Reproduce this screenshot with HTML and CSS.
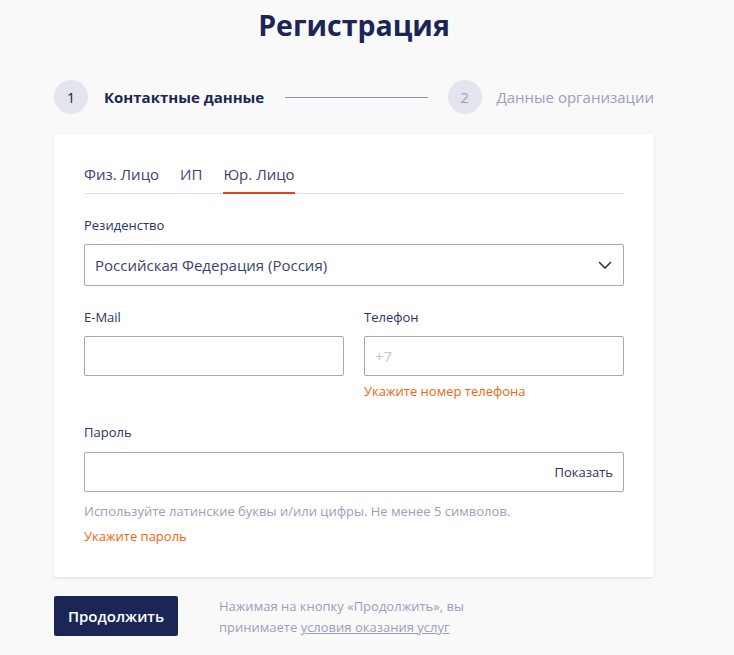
FILE: index.html
```html
<!DOCTYPE html>
<html lang="ru">
<head>
<meta charset="utf-8">
<title>Регистрация</title>
<link rel="stylesheet" href="styles.css">
</head>
<body>
<div class="page">
  <h1 class="title">Регистрация</h1>
  <div class="steps">
    <div class="step step-active">
      <span class="step-num">1</span>
      <span class="step-label">Контактные данные</span>
    </div>
    <div class="step-line"></div>
    <div class="step">
      <span class="step-num">2</span>
      <span class="step-label">Данные организации</span>
    </div>
  </div>

  <div class="card">
    <div class="tabs">
      <span class="tab">Физ. Лицо</span>
      <span class="tab">ИП</span>
      <span class="tab tab-active">Юр. Лицо</span>
    </div>

    <div class="field field-first">
      <div class="label">Резиденство</div>
      <div class="select">
        <span>Российская Федерация (Россия)</span>
        <svg class="chevron" width="14" height="8" viewBox="0 0 14 8"><path d="M1 1l6 6 6-6" fill="none" stroke="#2b3560" stroke-width="1.6"/></svg>
      </div>
    </div>

    <div class="row">
      <div class="field">
        <div class="label">E-Mail</div>
        <div class="input"></div>
      </div>
      <div class="field">
        <div class="label">Телефон</div>
        <div class="input"><span class="placeholder">+7</span></div>
        <div class="error error-tight">Укажите номер телефона</div>
      </div>
    </div>

    <div class="field field-pass">
      <div class="label">Пароль</div>
      <div class="input input-pass"><span class="show">Показать</span></div>
      <div class="hint">Используйте латинские буквы и/или цифры. Не менее 5 символов.</div>
      <div class="error">Укажите пароль</div>
    </div>
  </div>

  <div class="footer">
    <button class="btn">Продолжить</button>
    <p class="terms">Нажимая на кнопку «Продолжить», вы<br>принимаете <a class="terms-link">условия оказания услуг</a></p>
  </div>
</div>
</body>
</html>
```

FILE: styles.css
```css
* { box-sizing: border-box; }
html, body {
  margin: 0;
  padding: 0;
  background: #f9f9fa;
  font-family: "Open Sans", "Noto Sans", sans-serif;
  color: #2b3560;
}
.page {
  width: 600px;
  margin-left: 54px;
}
.title {
  margin: 0;
  font-size: 28.5px;
  line-height: 50px;
  font-weight: 700;
  color: #1b2656;
  text-align: center;
}
.steps {
  display: flex;
  align-items: center;
  margin-top: 30px;
  height: 34px;
}
.step {
  display: flex;
  align-items: center;
  gap: 15px;
}
.step-num {
  width: 34px;
  height: 34px;
  border-radius: 50%;
  background: #e2e5ee;
  display: flex;
  align-items: center;
  justify-content: center;
  font-size: 15px;
  color: #9aa0b8;
}
.step-label {
  font-size: 15px;
  color: #9aa0b8;
}
.step-active { gap: 16px; }
.step-active .step-num { color: #1b2656; }
.step-active .step-label { color: #1b2656; font-weight: 700; }
.step-line {
  flex: 1;
  height: 1px;
  background: #8a93b5;
  margin: 0 20px 0 21px;
}
.card {
  margin-top: 20px;
  background: #fff;
  border-radius: 2px;
  box-shadow: 0 1px 3px rgba(30, 40, 80, 0.12);
  padding: 30px 30px 32px;
}
.tabs {
  display: flex;
  gap: 21px;
  border-bottom: 1px solid #dfe1e8;
}
.tab {
  font-size: 15px;
  line-height: 20px;
  padding-bottom: 9px;
  color: #3a4470;
}
.tab-active {
  border-bottom: 2px solid #e8401c;
  margin-bottom: -1px;
  padding-bottom: 8px;
}
.field-first { margin-top: 22px; }
.label {
  font-size: 13px;
  line-height: 18px;
  margin-bottom: 10px;
  color: #2b3560;
}
.select {
  height: 42px;
  border: 1px solid #a3a8bf;
  border-radius: 2px;
  display: flex;
  align-items: center;
  justify-content: space-between;
  padding: 0 11px 0 10px;
  font-size: 15px;
  color: #3a4470;
}
.row {
  display: grid;
  grid-template-columns: 1fr 1fr;
  gap: 20px;
  margin-top: 22px;
}
.input {
  height: 40px;
  border: 1px solid #a3a8bf;
  border-radius: 2px;
  display: flex;
  align-items: center;
  padding: 0 10px;
  font-size: 15px;
}
.placeholder { color: #c2c6d3; }
.input-pass { justify-content: flex-end; }
.show { font-size: 13px; color: #2b3560; }
.error {
  font-size: 13px;
  line-height: 18px;
  color: #f4650f;
  margin-top: 7px;
}
.error-tight { margin-top: 6px; }
.field-pass { margin-top: 23px; }
.field-pass .label { margin-bottom: 11px; }
.hint {
  font-size: 13px;
  line-height: 18px;
  color: #9aa0b8;
  margin-top: 10px;
}
.footer {
  display: flex;
  align-items: flex-start;
  gap: 41px;
  margin-top: 19px;
}
.btn {
  width: 124px;
  height: 40px;
  border: none;
  border-radius: 2px;
  background: #1b2656;
  color: #fff;
  font-family: "Open Sans", "Noto Sans", sans-serif;
  font-size: 15px;
  font-weight: 600;
  padding: 0;
}
.terms {
  margin: 0;
  font-size: 13px;
  line-height: 21px;
  color: #9aa0b8;
}
.terms-link {
  color: #9aa0b8;
  text-decoration: underline;
}
```
